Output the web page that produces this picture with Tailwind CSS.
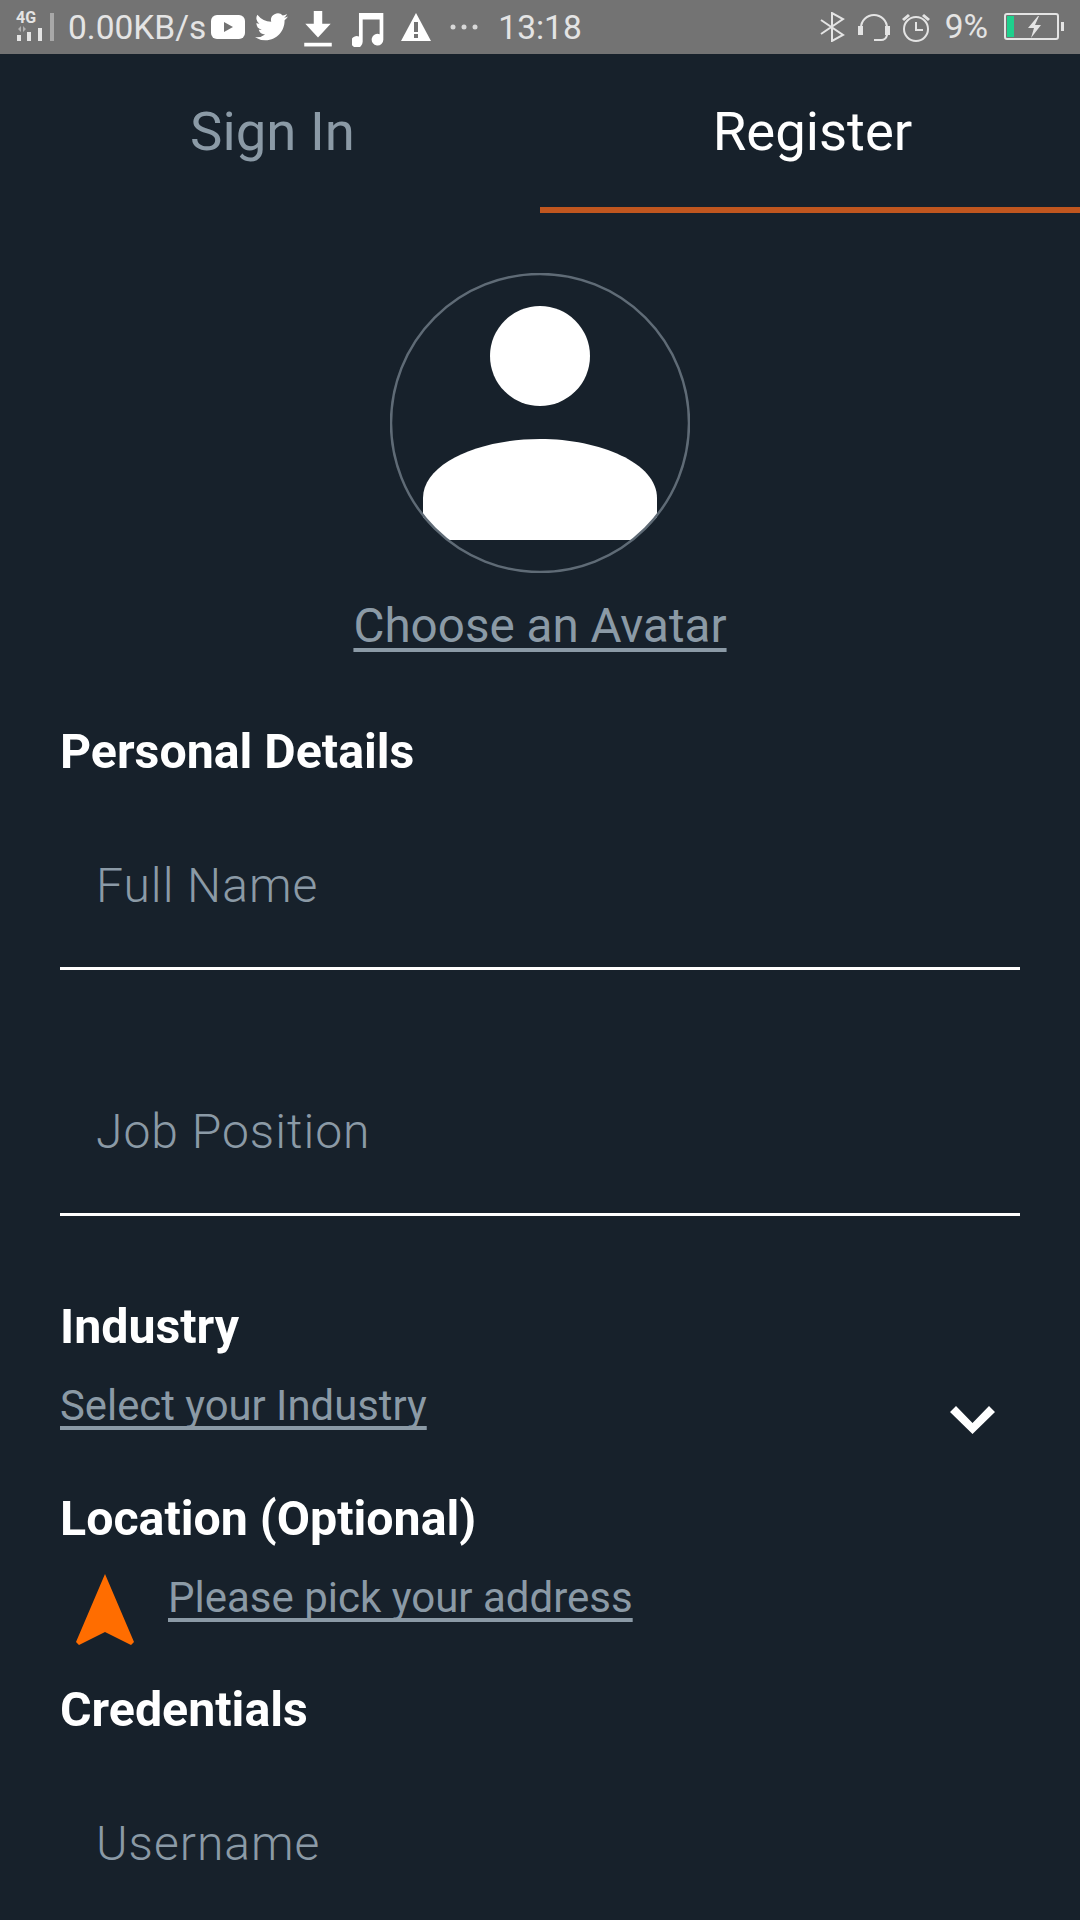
<!DOCTYPE html>
<html lang="en">
<head>
  <title>Register</title>
  <meta charset="UTF-8" />
  <script src="https://cdn.jsdelivr.net/npm/@tailwindcss/browser@4"></script>
</head>
<body class="font-['Roboto',sans-serif] bg-[#17212b] h-[1920px] w-[1080px] overflow-hidden">
  <!-- status bar -->
  <div class="flex h-[54px] items-center justify-between bg-[#737373] text-[#e4e4e4] text-[33.5px]">
    <div class="flex items-center pl-[14px]">
      <svg width="40" height="44" viewBox="0 -5 40 44" fill="#e4e4e4"><text x="2" y="13" font-size="16" font-weight="700" font-family="Roboto">4G</text><path d="M7 16v6l-3-3zM9 16v6l3-3z" fill="#b0b0b0"/><rect x="3" y="25" width="4" height="6"/><rect x="13" y="22" width="4" height="9"/><rect x="24" y="18" width="4" height="13"/><rect x="36" y="3" width="4" height="28" fill="#a8a8a8"/></svg>
      <span class="ml-[14px] mt-[2px]">0.00KB/s</span>
      <svg class="ml-[5px]" width="34" height="26" viewBox="0 0 34 26"><rect width="34" height="24" y="1" rx="6" fill="#fff"/><path d="M13 8l9 5-9 5z" fill="#737373"/></svg>
      <svg class="ml-[10px]" width="33" height="28" viewBox="0 0 24 20" fill="#fff"><path d="M24 2.4a9.8 9.8 0 0 1-2.8.8A4.9 4.9 0 0 0 23.300 .5a9.800 9.800 0 0 1-3.100 1.200 4.900 4.900 0 0 0-8.400 4.500A14 14 0 0 1 1.700 1a4.900 4.900 0 0 0 1.500 6.600 4.900 4.900 0 0 1-2.200-.6v.1a4.900 4.900 0 0 0 3.900 4.800 4.900 4.900 0 0 1-2.200.1 4.900 4.900 0 0 0 4.600 3.400A9.900 9.900 0 0 1 0 17.400 14 14 0 0 0 7.500 19.600c9.100 0 14-7.500 14-14v-.6A10 10 0 0 0 24 2.400z"/></svg>
      <svg class="ml-[16px] mt-[3px]" width="28" height="36" viewBox="0 0 26 34" fill="#fff"><path d="M9 0h8v12h8L13 25 1 12h8z"/><rect x="0" y="30" width="26" height="3.500"/></svg>
      <svg class="ml-[20px] mt-[3px]" width="33" height="36" viewBox="0 0 28 34" fill="#fff"><path d="M5 2h23v25a5.500 5.500 0 1 1-3.500-5V8H8.500v21a5.500 5.500 0 1 1-3.500-5z"/></svg>
      <svg class="ml-[15px]" width="32" height="28" viewBox="0 0 30 28"><path d="M15 0l15 28H0z" fill="#fff"/><rect x="13" y="9" width="4" height="10" fill="#737373"/><rect x="13" y="21" width="4" height="4" fill="#737373"/></svg>
      <svg class="ml-[16px]" width="32" height="8" viewBox="0 0 30 8" fill="#d8d8d8"><circle cx="4" cy="4" r="2.500"/><circle cx="15" cy="4" r="2.500"/><circle cx="26" cy="4" r="2.500"/></svg>
      <span class="ml-[18px] mt-[2px]">13:18</span>
    </div>
    <div class="flex items-center pr-[16px]">
      <svg width="26" height="30" viewBox="0 0 26 30" fill="none" stroke="#e4e4e4" stroke-width="2"><path d="M1 8l22 15-11 6V1l11 6L1 22"/></svg>
      <svg class="ml-[12px]" width="32" height="30" viewBox="0 0 32 30" fill="none" stroke="#e4e4e4" stroke-width="2"><path d="M3 18V16a13 13 0 0 1 26 0v2M29 20v3a6 6 0 0 1-6 5h-7"/><rect x="1" y="15" width="3" height="7" fill="#e4e4e4"/><rect x="28" y="15" width="3" height="7" fill="#e4e4e4"/></svg>
      <svg class="ml-[11px]" width="30" height="30" viewBox="0 0 30 30" fill="none" stroke="#e4e4e4" stroke-width="2"><circle cx="15" cy="17" r="12"/><path d="M15 10v8h7"/><path d="M1 7l6-5 2 2-6 5zM29 7l-6-5-2 2 6 5z" fill="#e4e4e4" stroke="none"/></svg>
      <span class="ml-[14px]">9%</span>
      <svg class="ml-[16px]" width="60" height="28" viewBox="0 0 60 28"><rect x="1" y="1" width="53" height="25" rx="2" fill="none" stroke="#e4e4e4" stroke-width="2"/><rect x="3" y="3" width="7" height="21" fill="#1fd08d"/><path d="M34 3l-10 12h6l-3 10 10-13h-6l4-9z" fill="#e4e4e4"/><rect x="57" y="9" width="3" height="9" fill="#e4e4e4"/></svg>
    </div>
  </div>

  <!-- tabs -->
  <div class="flex h-[159px] text-[54.5px]">
    <div class="flex-1 pl-[5px] pt-[45px] text-center leading-[64px] text-[#8b9aa6] border-b-[6px] border-transparent">Sign In</div>
    <div class="flex-1 pl-[5px] pt-[45px] text-center leading-[64px] text-white border-b-[6px] border-[#c0561f]">Register</div>
  </div>

  <!-- avatar -->
  <div class="mt-[60px] flex flex-col items-center">
    <svg width="300" height="300" viewBox="0 0 300 300">
      <path d="M33 244V225C33 190 90 166 150 166S267 190 267 225V244A149 149 0 0 1 242 267H58A149 149 0 0 1 33 244z" fill="#fff"/>
      <circle cx="150" cy="83" r="50" fill="#fff"/>
      <circle cx="150" cy="150" r="149" fill="none" stroke="#5f6b76" stroke-width="2.500"/>
    </svg>
    <a class="mt-[23px] text-[47.6px] leading-[60px] text-[#8b9aa6] underline underline-offset-[6px] [text-decoration-skip-ink:none]">Choose an Avatar</a>
  </div>

  <div class="px-[60px]">
    <h2 class="mt-[66px] text-[48.3px] font-bold leading-[60px] text-white">Personal Details</h2>

    <div class="mt-[74px] h-[114px] border-b-[3px] border-white pl-[36px] text-[48px] font-light leading-[60px] tracking-[1px] text-[#8b9aa6]">Full Name</div>
    <div class="mt-[132px] h-[114px] border-b-[3px] border-white pl-[36px] text-[48px] font-light leading-[60px] tracking-[1px] text-[#8b9aa6]">Job Position</div>

    <h2 class="mt-[81px] text-[48.3px] font-bold leading-[60px] text-white">Industry</h2>
    <div class="mt-[19px] flex items-start justify-between">
      <a class="text-[41.8px] leading-[60px] text-[#8b9aa6] underline underline-offset-[6px] [text-decoration-skip-ink:none]">Select your Industry</a>
      <svg class="mr-[25px] mt-[30px]" width="45" height="28" viewBox="0 0 45 28" fill="#fff"><path d="M0 6L6 0 22.500 17 39 0l6 6-22.500 22z"/></svg>
    </div>

    <h2 class="mt-[53px] text-[48.3px] font-bold leading-[60px] text-white">Location (Optional)</h2>
    <div class="flex items-start">
      <svg class="ml-[16px] mt-[25px]" width="58" height="72" viewBox="0 0 58 72" fill="#ff6d00"><path d="M29 0L58 68 55 71 29 58 3 71 0 68z"/></svg>
      <a class="ml-[34px] mt-[19px] text-[42px] leading-[60px] text-[#8b9aa6] underline underline-offset-[6px] [text-decoration-skip-ink:none]">Please pick your address</a>
    </div>

    <h2 class="mt-[34px] text-[48.3px] font-bold leading-[60px] text-white">Credentials</h2>
    <div class="mt-[74px] pl-[36px] text-[48px] font-light leading-[60px] tracking-[1px] text-[#8b9aa6]">Username</div>
  </div>
</body>
</html>
